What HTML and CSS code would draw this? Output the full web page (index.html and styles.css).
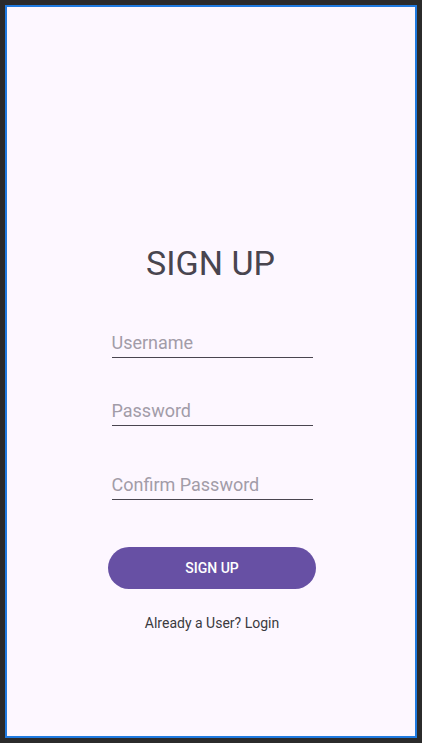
FILE: index.html
```html
<!DOCTYPE html>
<html>
<head>
<meta charset="utf-8">
<link rel="stylesheet" href="styles.css">
</head>
<body>
<div class="device">
  <div class="screen">
    <h1 class="title">SIGN UP</h1>
    <div class="field field-first"><span class="placeholder">Username</span></div>
    <div class="field field-mid"><span class="placeholder">Password</span></div>
    <div class="field field-last"><span class="placeholder">Confirm Password</span></div>
    <button class="btn">SIGN UP</button>
    <p class="link">Already a User? Login</p>
  </div>
</div>
</body>
</html>
```
FILE: styles.css
```css
html, body {
  margin: 0;
  padding: 0;
}
body {
  background: #2b2b2b;
  padding: 5px;
  height: 743px;
  box-sizing: border-box;
  font-family: Roboto, "Noto Sans", sans-serif;
}
.device {
  height: 100%;
  box-sizing: border-box;
  border: 2px solid #1f7ae0;
  background: #fdf7ff;
}
.screen {
  height: 100%;
  display: flex;
  flex-direction: column;
  align-items: center;
  padding-top: 236px;
  padding-left: 2px;
  box-sizing: border-box;
}
.title {
  margin: 0 3px 0 0;
  font-weight: 400;
  font-size: 34px;
  line-height: 40px;
  color: #49454f;
}
.field {
  width: 201px;
  border-bottom: 1px solid #49454f;
  padding-bottom: 2px;
  line-height: 22px;
}
.field-first {
  margin-top: 49px;
}
.field-mid {
  margin-top: 42px;
}
.field-last {
  margin-top: 48px;
}
.placeholder {
  font-size: 18px;
  line-height: 22px;
  color: #a29ca8;
}
.btn {
  margin-top: 47px;
  width: 208px;
  height: 42px;
  border: none;
  border-radius: 21px;
  background: #6750a4;
  color: #fff;
  font-family: Roboto, sans-serif;
  font-weight: 500;
  font-size: 14px;
  padding: 0;
}
.link {
  margin: 24px 0 0;
  font-size: 14px;
  line-height: 20px;
  color: #3b3a40;
}
```
